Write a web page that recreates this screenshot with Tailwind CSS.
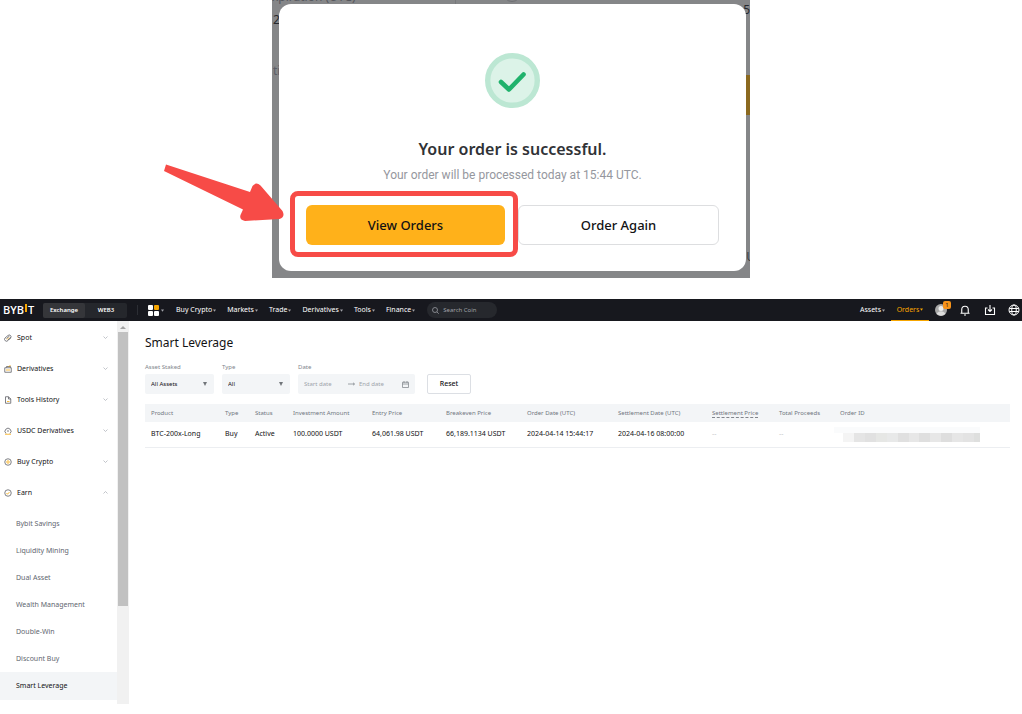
<!DOCTYPE html>
<html lang="en">
<head>
  <meta charset="UTF-8" />
  <meta name="viewport" content="width=device-width, initial-scale=1.0"/>
  <title>Smart Leverage Orders</title>

  <!-- Tailwind CSS -->
  <script src="https://cdn.jsdelivr.net/npm/@tailwindcss/browser@4"></script>
</head>

<body class="bg-white font-['Noto_Sans',sans-serif] text-[#121214] text-[7px] leading-[10px]">

  <!-- Order confirmation -->
  <section class="relative w-[478px] mx-auto bg-[#858688] pl-[7px] pr-1 pt-1 pb-[7px] text-xs leading-4 text-[#3a3c42]">
    <!-- Page behind the modal -->
    <div class="absolute inset-0 overflow-hidden">
      <span class="absolute left-0 -top-[11px] text-[#55575d]">xpiration (UTC)</span>
      <span class="absolute left-px top-3 text-[#26282e]">2</span>
      <span class="absolute left-px top-[63px] text-[#5b5d66]">ti</span>
      <span class="absolute left-[183px] top-0 w-px h-1 bg-[#77787b]"></span>
      <span class="absolute left-[231px] -top-4 size-[18px] rounded-full border border-[#6f7073]"></span>
      <span class="absolute right-0 top-[2px] text-[#26282e]">5</span>
      <span class="absolute right-0 top-[75px] w-2 h-10 bg-[#8b691f]"></span>
      <span class="absolute -right-[5px] top-[249px]">U</span>
    </div>

    <!-- Modal -->
    <div class="relative bg-white rounded-xl h-[267px] px-[27px] pt-[49px] text-center">
      <svg class="mx-auto size-[55px]" viewBox="0 0 55 55" fill="none">
        <circle cx="27.500" cy="27.500" r="24.800" fill="#dcf3e8" stroke="#bce7d3" stroke-width="5.400"/>
        <path d="M16 29l8 7.500L38.500 21.500" stroke="#20b26c" stroke-width="4.600" stroke-linecap="round" stroke-linejoin="round"/>
      </svg>
      <h2 class="mt-[31px] text-base leading-5 font-semibold text-[#303236]">Your order is successful.</h2>
      <p class="mt-2 font-['Roboto',sans-serif] text-xs leading-4 text-[#95979e]">Your order will be processed today at 15:44 UTC.</p>
      <div class="relative mt-[22px] flex gap-[13px] text-[13px] text-[#121214]">
        <button class="flex-1 h-10 rounded-md bg-[#ffb11a] font-medium">View Orders</button>
        <button class="flex-1 h-10 rounded-md border border-[#dddee0] font-medium">Order Again</button>
        <span class="absolute -left-4 -top-[14px] w-[228px] h-[66px] rounded-lg border-[5px] border-[#f74b47]"></span>
      </div>
    </div>

    <!-- Pointer -->
    <svg class="absolute -left-[109px] top-[163px] w-[122px] h-[60px]" viewBox="0 0 122 60" fill="#f74b47">
      <path d="M3 1.500L87 29L89.500 23Q93 18.500 97.500 22.500L119.500 48Q122.500 54 116.500 56L82 58Q76 57 77.500 52L80 46.500L1 8Z"/>
    </svg>
  </section>

  <!-- Orders page -->
  <div class="mt-[21px]">
    <header class="flex items-center h-[22px] bg-[#17181e] text-white pl-[3px] pr-[2px]">
      <a href="#" aria-label="BYBIT" class="flex items-center w-10 font-semibold text-[11px] leading-[22px] font-['Open_Sans',sans-serif]"><span>BYB</span><span class="w-[2px] h-2 mx-px mb-1 bg-[#f7a600]"></span><span>T</span></a>

      <div class="flex w-[84px] h-[15px] rounded-xs bg-[#25272c] text-[6px] font-semibold">
        <button class="flex-1 rounded-xs bg-[#35363a]">Exchange</button>
        <button class="flex-1">WEB3</button>
      </div>
      <span class="ml-2.5 w-px h-2.5 bg-[#2c2e34]"></span>

      <button class="ml-2.5 flex items-center gap-[2px]" aria-label="Products">
        <svg class="size-[11px]" viewBox="0 0 11 11" fill="#fff">
          <rect width="5" height="5" rx="1"/><rect y="6" width="5" height="5" rx="1"/><rect x="6" y="6" width="5" height="5" rx="1"/><rect x="6" width="5" height="5" rx="1" fill="#f7a600"/>
        </svg>
        <svg class="size-[3px]" viewBox="0 0 4 3" fill="#a0a2a8"><path d="M0 0h4L2 3z"/></svg>
      </button>

      <nav class="flex items-center ml-3 gap-[11px]">
        <a href="#" class="flex items-center gap-px">Buy Crypto<svg class="size-[3px]" viewBox="0 0 4 3" fill="#a0a2a8"><path d="M0 0h4L2 3z"/></svg></a>
        <a href="#" class="flex items-center gap-px">Markets<svg class="size-[3px]" viewBox="0 0 4 3" fill="#a0a2a8"><path d="M0 0h4L2 3z"/></svg></a>
        <a href="#" class="flex items-center gap-px">Trade<svg class="size-[3px]" viewBox="0 0 4 3" fill="#a0a2a8"><path d="M0 0h4L2 3z"/></svg></a>
        <a href="#" class="flex items-center gap-px">Derivatives<svg class="size-[3px]" viewBox="0 0 4 3" fill="#a0a2a8"><path d="M0 0h4L2 3z"/></svg></a>
        <a href="#" class="flex items-center gap-px">Tools<svg class="size-[3px]" viewBox="0 0 4 3" fill="#a0a2a8"><path d="M0 0h4L2 3z"/></svg></a>
        <a href="#" class="flex items-center gap-px">Finance<svg class="size-[3px]" viewBox="0 0 4 3" fill="#a0a2a8"><path d="M0 0h4L2 3z"/></svg></a>
      </nav>

      <label class="ml-3 flex items-center gap-1 w-[70px] h-4 rounded-full bg-[#26282d] px-[5px]">
        <svg class="size-[7px] shrink-0" viewBox="0 0 14 14" fill="none" stroke="#a0a2a8" stroke-width="1.500"><circle cx="6" cy="6" r="5"/><path d="M10 10l3.500 3.500"/></svg>
        <input type="text" placeholder="Search Coin" aria-label="Search Coin" class="w-full min-w-0 text-[6px] bg-transparent outline-none placeholder:text-[#a0a2a8]" />
      </label>

      <div class="ml-auto flex items-center h-full">
        <a href="#" class="flex items-center gap-px px-1.5">Assets<svg class="size-[3px]" viewBox="0 0 4 3" fill="#a0a2a8"><path d="M0 0h4L2 3z"/></svg></a>
        <a href="#" class="flex items-center justify-center gap-px w-[38px] h-full border-b border-[#f7a600] text-[#f7a600]">Orders<svg class="size-[3px]" viewBox="0 0 4 3" fill="#f7a600"><path d="M0 0h4L2 3z"/></svg></a>
        <button class="relative ml-1.5" aria-label="Account">
          <svg class="size-3" viewBox="0 0 12 12"><circle cx="6" cy="6" r="6" fill="#a7a7a7"/><circle cx="6" cy="4.500" r="2.500" fill="#eee"/><path d="M1.500 9.500Q6 5 10.500 9.500Q6 14 1.500 9.500" fill="#ddd"/></svg>
          <span class="absolute -top-[3px] -right-1 size-2 rounded-xs bg-[#f7931a] text-[6px] leading-2 text-center text-[#17181e]">1</span>
        </button>
        <button class="ml-3" aria-label="Notifications">
          <svg class="size-3" viewBox="0 0 24 24" fill="none" stroke="#fff" stroke-width="2.200" stroke-linejoin="round"><path d="M3 18.500h18M5.500 18v-7a6.500 6.500 0 0 1 13 0v7M10 22h4"/></svg>
        </button>
        <button class="ml-[13px]" aria-label="Download">
          <svg class="size-3" viewBox="0 0 24 24" fill="none" stroke="#fff" stroke-width="2.200"><path d="M7 8H3v13h18V8h-4M12 2v13M8 11l4 4 4-4"/></svg>
        </button>
        <button class="ml-3" aria-label="Language">
          <svg class="size-3" viewBox="0 0 24 24" fill="none" stroke="#fff" stroke-width="2"><circle cx="12" cy="12" r="10"/><ellipse cx="12" cy="12" rx="4.500" ry="10"/><path d="M2.500 9h19M2.500 15h19"/></svg>
        </button>
      </div>
    </header>

    <div class="flex">
      <!-- Sidebar -->
      <aside class="flex w-[129px] shrink-0 h-[383px]">
        <div class="flex-1">
          <ul class="pt-px">
            <li><a href="#" class="flex items-center h-[31px] pl-1 pr-[9px] gap-[5px]">
              <svg class="size-2" viewBox="0 0 16 16" fill="none" stroke="#55575d" stroke-width="1.500"><path d="M2 8l6-5a3.500 3.500 0 0 1 5 5l-5 5a3.500 3.500 0 0 1-6-5z"/><path d="M5 9l6-5M8 12l6-5" /><path d="M6 11l4-4" stroke="#f7a600"/></svg>
              <span class="flex-1">Spot</span>
              <svg class="w-[5px] h-[3px]" viewBox="0 0 10 6" fill="none" stroke="#adb1b8" stroke-width="1.500"><path d="M1 1l4 4 4-4"/></svg></a></li>
            <li><a href="#" class="flex items-center h-[31px] pl-1 pr-[9px] gap-[5px]">
              <svg class="size-2" viewBox="0 0 16 16" fill="none" stroke="#55575d" stroke-width="1.500"><path d="M1.500 5.500h13v9h-13zM5 5V3h8v2"/><path d="M4 10h8M9 3l4-2" stroke="#f7a600"/></svg>
              <span class="flex-1">Derivatives</span>
              <svg class="w-[5px] h-[3px]" viewBox="0 0 10 6" fill="none" stroke="#adb1b8" stroke-width="1.500"><path d="M1 1l4 4 4-4"/></svg></a></li>
            <li><a href="#" class="flex items-center h-[31px] pl-1 pr-[9px] gap-[5px]">
              <svg class="size-2" viewBox="0 0 16 16" fill="none" stroke="#55575d" stroke-width="1.500"><path d="M3 1.500h6l4.500 4.500v8.500H3zM9 1.500V6h4.500"/><path d="M6 11h5" stroke="#f7a600"/></svg>
              <span class="flex-1">Tools History</span>
              <svg class="w-[5px] h-[3px]" viewBox="0 0 10 6" fill="none" stroke="#adb1b8" stroke-width="1.500"><path d="M1 1l4 4 4-4"/></svg></a></li>
            <li><a href="#" class="flex items-center h-[31px] pl-1 pr-[9px] gap-[5px]">
              <svg class="size-2" viewBox="0 0 16 16" fill="none" stroke="#55575d" stroke-width="1.500"><path d="M4 13a6 6 0 1 1 8 0M6 8h4"/><path d="M2 14.500h12" stroke="#f7a600"/></svg>
              <span class="flex-1">USDC Derivatives</span>
              <svg class="w-[5px] h-[3px]" viewBox="0 0 10 6" fill="none" stroke="#adb1b8" stroke-width="1.500"><path d="M1 1l4 4 4-4"/></svg></a></li>
            <li><a href="#" class="flex items-center h-[31px] pl-1 pr-[9px] gap-[5px]">
              <svg class="size-2" viewBox="0 0 16 16" fill="none" stroke="#55575d" stroke-width="1.500"><circle cx="8" cy="8" r="6.500"/><circle cx="8" cy="8" r="2.500" stroke="#f7a600"/></svg>
              <span class="flex-1">Buy Crypto</span>
              <svg class="w-[5px] h-[3px]" viewBox="0 0 10 6" fill="none" stroke="#adb1b8" stroke-width="1.500"><path d="M1 1l4 4 4-4"/></svg></a></li>
            <li><a href="#" class="flex items-center h-[31px] pl-1 pr-[9px] gap-[5px]">
              <svg class="size-2" viewBox="0 0 16 16" fill="none" stroke="#55575d" stroke-width="1.500"><circle cx="8" cy="8" r="6.500"/><path d="M5 8l2 2.500L11 6" stroke="#f7a600"/></svg>
              <span class="flex-1">Earn</span>
              <svg class="w-[5px] h-[3px]" viewBox="0 0 10 6" fill="none" stroke="#adb1b8" stroke-width="1.500"><path d="M1 5l4-4 4 4"/></svg></a></li>
          </ul>
          <ul class="pt-[2px] text-[#62666f]">
            <li><a href="#" class="flex items-center h-[27px] pl-4">Bybit Savings</a></li>
            <li><a href="#" class="flex items-center h-[27px] pl-4">Liquidity Mining</a></li>
            <li><a href="#" class="flex items-center h-[27px] pl-4">Dual Asset</a></li>
            <li><a href="#" class="flex items-center h-[27px] pl-4">Wealth Management</a></li>
            <li><a href="#" class="flex items-center h-[27px] pl-4">Double-Win</a></li>
            <li><a href="#" class="flex items-center h-[27px] pl-4">Discount Buy</a></li>
            <li><a href="#" class="flex items-center h-7 pl-4 bg-[#f3f5f7] text-[#121214]">Smart Leverage</a></li>
          </ul>
        </div>
        <!-- Scrollbar -->
        <div class="w-3 px-px bg-[#f1f1f1]">
          <svg class="w-full h-[11px]" viewBox="0 0 10 11" fill="#a3a3a3"><path d="M2 8L5 5l3 3z"/></svg>
          <div class="h-[274px] bg-[#c1c1c1]"></div>
        </div>
      </aside>

      <!-- Content -->
      <main class="flex-1 min-w-0 pl-4 pr-3 pt-3.5">
        <h1 class="text-xs leading-4 font-normal">Smart Leverage</h1>

        <form class="mt-[11px] flex items-end gap-2">
          <div class="w-[69px]">
            <label for="asset" class="block mb-[2px] text-[6px] text-[#81858c]">Asset Staked</label>
            <div class="relative">
              <select id="asset" class="appearance-none w-full h-5 rounded-xs bg-[#f3f5f7] pl-1.5 text-[6px]"><option>All Assets</option></select>
              <svg class="absolute right-[7px] top-2 w-1 h-1 pointer-events-none" viewBox="0 0 4 4" fill="#71757a"><path d="M0 0h4L2 4z"/></svg>
            </div>
          </div>
          <div class="w-[68px]">
            <label for="type" class="block mb-[2px] text-[6px] text-[#81858c]">Type</label>
            <div class="relative">
              <select id="type" class="appearance-none w-full h-5 rounded-xs bg-[#f3f5f7] pl-1.5 text-[6px]"><option>All</option></select>
              <svg class="absolute right-[7px] top-2 w-1 h-1 pointer-events-none" viewBox="0 0 4 4" fill="#71757a"><path d="M0 0h4L2 4z"/></svg>
            </div>
          </div>
          <div class="w-[117px]">
            <label for="start" class="block mb-[2px] text-[6px] text-[#81858c]">Date</label>
            <div class="flex items-center h-5 rounded-xs bg-[#f3f5f7] px-1.5 text-[6px]">
              <input id="start" type="text" placeholder="Start date" class="w-11 bg-transparent outline-none placeholder:text-[#a0a4ab]" />
              <svg class="w-[7px] h-1 shrink-0" viewBox="0 0 14 8" fill="none" stroke="#81858c" stroke-width="1.500"><path d="M0 4h13M10 1.500l3 2.500-3 2.500"/></svg>
              <input type="text" placeholder="End date" aria-label="End date" class="ml-1 flex-1 min-w-0 bg-transparent outline-none placeholder:text-[#a0a4ab]" />
              <svg class="size-[7px] shrink-0" viewBox="0 0 14 14" fill="none" stroke="#81858c" stroke-width="1.500"><path d="M1 2.500h12v10.500H1zM1 6h12M4 0v4M10 0v4"/></svg>
            </div>
          </div>
          <button type="reset" class="ml-1 w-11 h-5 rounded-xs border border-[#dcdfe4] font-medium">Reset</button>
        </form>

        <table class="mt-2.5 w-full table-fixed text-left whitespace-nowrap">
          <thead class="bg-[#f3f5f7] text-[6px] text-[#71757f]">
            <tr class="h-[18px]">
              <th class="w-[74px] pl-1.5 font-normal">Product</th>
              <th class="w-[30px] pl-1.5 font-normal">Type</th>
              <th class="w-[38px] pl-1.5 font-normal">Status</th>
              <th class="w-[79px] pl-1.5 font-normal">Investment Amount</th>
              <th class="w-[74px] pl-1.5 font-normal">Entry Price</th>
              <th class="w-[81px] pl-1.5 font-normal">Breakeven Price</th>
              <th class="w-[91px] pl-1.5 font-normal">Order Date (UTC)</th>
              <th class="w-[94px] pl-1.5 font-normal">Settlement Date (UTC)</th>
              <th class="w-[67px] pl-1.5 font-normal"><span class="border-b border-dashed border-[#81858c]">Settlement Price</span></th>
              <th class="w-[61px] pl-1.5 font-normal">Total Proceeds</th>
              <th class="pl-1.5 font-normal">Order ID</th>
            </tr>
          </thead>
          <tbody>
            <tr class="h-[25px] border-b border-[#eceef1]">
              <td class="pl-1.5">BTC-200x-Long</td>
              <td class="pl-1.5">Buy</td>
              <td class="pl-1.5">Active</td>
              <td class="pl-1.5">100.0000 USDT</td>
              <td class="pl-1.5">64,061.98 USDT</td>
              <td class="pl-1.5">66,189.1134 USDT</td>
              <td class="pl-1.5">2024-04-14 15:44:17</td>
              <td class="pl-1.5">2024-04-16 08:00:00</td>
              <td class="pl-1.5 text-[#c4c6ca]">--</td>
              <td class="pl-1.5 text-[#c4c6ca]">--</td>
              <td>
                <!-- Masked order id -->
                <div class="w-[146px] pt-1.5 bg-[#fafbfc]">
                  <div class="flex h-[9px]">
                    <span class="w-[9px] bg-white"></span>
                    <span class="w-[11px] bg-[#f4f4f4]"></span>
                    <span class="flex-1 bg-[#e5e5e5]"></span>
                    <span class="flex-1 bg-[#e1e1e1]"></span>
                    <span class="flex-1 bg-[#e6e7e5]"></span>
                    <span class="flex-1 bg-[#e8e9e9]"></span>
                    <span class="flex-1 bg-[#e0e0e0]"></span>
                    <span class="flex-1 bg-[#e7e7e7]"></span>
                    <span class="flex-1 bg-[#dfdfdf]"></span>
                    <span class="flex-1 bg-[#e7e7e7]"></span>
                    <span class="flex-1 bg-[#dedede]"></span>
                    <span class="flex-1 bg-[#e6e6e6]"></span>
                    <span class="flex-1 bg-[#e3e3e3]"></span>
                    <span class="w-1.5 bg-[#dedfde]"></span>
                  </div>
                </div>
              </td>
            </tr>
          </tbody>
        </table>
      </main>
    </div>
  </div>
</body>
</html>
